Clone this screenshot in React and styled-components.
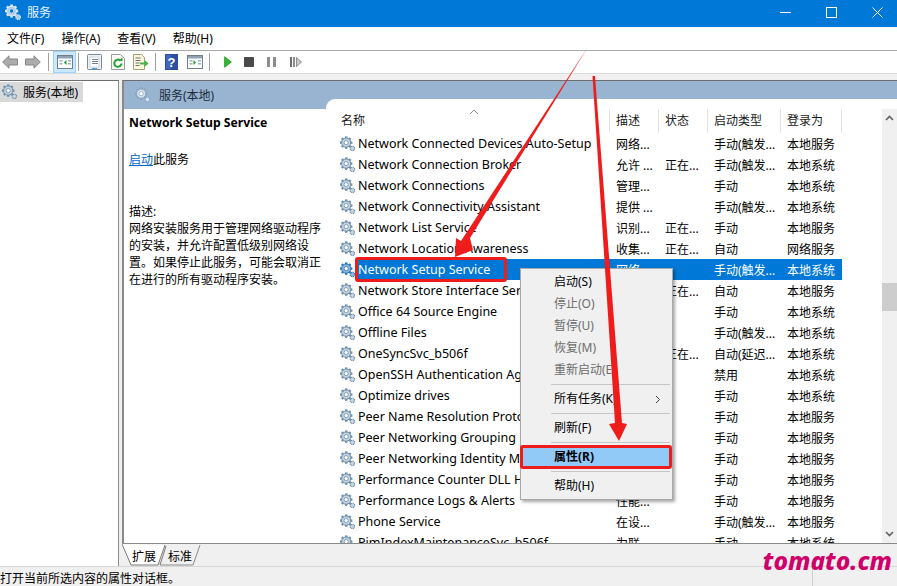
import React from "react";
import styled, { createGlobalStyle } from "styled-components";

const UI_FONT = `"Noto Sans", "Noto Sans CJK SC", sans-serif`;

const GlobalStyle = createGlobalStyle`
    html, body {
        margin: 0;
        padding: 0;
        background: #f0f0f0;
    }
    body {
        font-family: ${UI_FONT};
        font-size: 12px;
        color: #000;
    }
`;

const Page = styled.div`
    position: relative;
    width: 897px;
    height: 586px;
    overflow: hidden;
    display: flex;
    flex-direction: column;
    background: #f0f0f0;
`;

const TitleBar = styled.div`
    height: 27px;
    box-sizing: border-box;
    background: #0078d7;
    color: #fff;
    display: flex;
    align-items: center;
    padding: 0 0 3px 5px;
    flex: none;
`;

const TitleText = styled.span`
    font-size: 12px;
    color: #e8f2fb;
    flex: 1;
    margin-left: 5px;
`;

const WindowButton = styled.div`
    width: 46px;
    height: 24px;
    display: flex;
    align-items: center;
    justify-content: center;
    position: relative;
    left: 3px;
`;

const MenuBar = styled.div`
    height: 22px;
    background: #fff;
    border-bottom: 1px solid #a9a9a9;
    display: flex;
    align-items: center;
    padding: 1px 0 0 7px;
    gap: 17px;
    flex: none;
`;

const MenuLabel = styled.span`
    font-size: 12px;
    line-height: 22px;
`;

const Toolbar = styled.div`
    height: 22px;
    background: #fff;
    border-bottom: 1px solid #dcdcdc;
    display: flex;
    align-items: center;
    flex: none;
`;

const ToolButton = styled.div`
    width: ${(p) => p.$w}px;
    height: 22px;
    display: flex;
    align-items: center;
    justify-content: center;
    box-sizing: border-box;
    background: ${(p) => (p.$active ? "#cce8ff" : "transparent")};
    border: ${(p) => (p.$active ? "1px solid #99d1ff" : "none")};
`;

const ToolDivider = styled.div`
    width: 1px;
    height: 18px;
    background: #a0a0a0;
    margin: 0 4px 0 ${(p) => p.$left}px;
`;

const Main = styled.div`
    flex: 1;
    min-height: 0;
    margin-top: 6px;
    display: flex;
    gap: 3px;
`;

const TreePane = styled.div`
    width: 119px;
    flex: none;
    background: #fff;
    border-top: 1px solid #6d6d6d;
    border-right: 1px solid #8a8a8a;
    padding-top: 1px;
    box-sizing: border-box;
`;

const TreeItem = styled.div`
    display: flex;
    align-items: center;
    gap: 5px;
    height: 20px;
    padding-left: 2px;
    background: #d9d9d9;
    font-size: 12px;
    width: 83px;
    box-sizing: border-box;
`;

const ContentColumn = styled.div`
    flex: 1;
    min-width: 0;
    display: flex;
    flex-direction: column;
`;

const ContentPane = styled.div`
    flex: 1;
    min-height: 0;
    display: flex;
    flex-direction: column;
    border-top: 1px solid #6d6d6d;
    border-left: 2px solid #8a8a8a;
    border-bottom: 1px solid #8a8a8a;
    background: #fff;
`;

const PaneHeader = styled.div`
    height: 28px;
    background: #99b4d1;
    display: flex;
    align-items: center;
    gap: 8px;
    padding-left: 11px;
    font-size: 12px;
    color: #1c2b3a;
    flex: none;
`;

const PaneBody = styled.div`
    flex: 1;
    min-height: 0;
    display: flex;
    margin-top: -10px;
`;

const Details = styled.div`
    width: 202px;
    flex: none;
    padding: 15px 0 0 5px;
    box-sizing: border-box;
    line-height: 17px;
    font-size: 12px;
`;

const DetailsTitle = styled.div`
    font-weight: 700;
    font-size: 12.2px;
    line-height: 18px;
    margin-bottom: 19px;
`;

const StartLine = styled.div`
    margin-bottom: 35px;
`;

const StartLink = styled.span`
    color: #0066cc;
    text-decoration: underline;
`;

const ListArea = styled.div`
    position: relative;
    flex: 1;
    min-width: 0;
    display: flex;
    overflow: hidden;
    padding-top: 10px;
    box-sizing: border-box;
    background: #fff;
    border-top-left-radius: 9px;
`;

const Grid = styled.div`
    flex: 1;
    min-width: 0;
    overflow: hidden;
    display: flex;
    flex-direction: column;
`;

const HeaderRow = styled.div`
    display: grid;
    grid-template-columns: 284px 49px 49px 73px 61px;
    height: 24px;
    flex: none;
`;

const HeaderCell = styled.div`
    position: relative;
    padding-left: ${(p) => p.$pad || 6}px;
    font-size: 12px;
    line-height: 24px;
    color: #1a1a1a;
    border-right: 1px solid #e3e3e3;
`;

const SortArrow = styled.svg`
    position: absolute;
    left: 143px;
    top: 0;
`;

const Rows = styled.div`
    flex: 1;
    min-height: 0;
    overflow: hidden;
`;

const Row = styled.div`
    display: flex;
    height: 21px;
    font-size: 12px;
`;

const RowIcon = styled.div`
    width: 30px;
    flex: none;
    display: flex;
    align-items: center;
    padding-left: 14px;
    box-sizing: border-box;
`;

const RowBody = styled.div`
    display: grid;
    grid-template-columns: 254px 49px 49px 73px 61px;
    width: 486px;
    align-items: center;
    background: ${(p) => (p.$selected ? "#0078d7" : "transparent")};
    color: ${(p) => (p.$selected ? "#fff" : "#000")};
`;

const NameCell = styled.div`
    padding-left: 2px;
    white-space: nowrap;
    overflow: hidden;
    font-size: 12.5px;
`;

const Cell = styled.div`
    padding-left: 6px;
    white-space: nowrap;
    overflow: hidden;
`;

const ScrollBar = styled.div`
    width: 15px;
    flex: none;
    background: #f0f0f0;
    display: flex;
    flex-direction: column;
    justify-content: space-between;
    align-items: center;
    position: relative;
`;

const ScrollThumb = styled.div`
    position: absolute;
    left: 0;
    top: 174px;
    width: 15px;
    height: 28px;
    background: #cdcdcd;
`;

const ScrollArrow = styled.svg`
    margin: 6px 0;
`;

const TabStrip = styled.div`
    height: 22px;
    display: flex;
    flex: none;
`;

const TabShape = styled.svg`
    display: block;
    flex: none;
`;

const StatusBar = styled.div`
    height: 19px;
    border-top: 1px solid #d7d7d7;
    font-size: 12px;
    line-height: 23px;
    flex: none;
    display: grid;
    grid-template-columns: 813px 1fr;
    overflow: hidden;
`;

const StatusCell = styled.div`
    border-right: ${(p) => (p.$divider ? "1px solid #d0d0d0" : "none")};
`;

const ContextMenu = styled.div`
    position: absolute;
    left: 520px;
    top: 268px;
    width: 153px;
    height: 232px;
    box-sizing: border-box;
    background: #f0f0f0;
    border: 1px solid #a8a8a8;
    box-shadow: 2px 2px 3px rgba(0, 0, 0, 0.35);
    padding-top: 2px;
    font-size: 12px;
`;

const MenuItem = styled.div`
    height: 22px;
    line-height: 22px;
    position: relative;
    white-space: nowrap;
    overflow: hidden;
    color: ${(p) => (p.$disabled ? "#6d6d6d" : "#000")};
    background: ${(p) => (p.$active ? "#91c9f7" : "transparent")};
    font-weight: ${(p) => (p.$active ? 700 : 400)};
    margin: ${(p) => (p.$active ? "0 2px" : "0")};
    padding-left: ${(p) => (p.$active ? "31px" : "33px")};
`;

const Caret = styled.svg`
    position: absolute;
    right: 11px;
    top: 7px;
`;

const MenuSeparator = styled.div`
    height: 1px;
    margin: 3px 2px 3px 30px;
    background: #c6c6c6;
`;

const Highlight = styled.div`
    position: absolute;
    left: ${(p) => p.$x}px;
    top: ${(p) => p.$y}px;
    width: ${(p) => p.$w}px;
    height: ${(p) => p.$h}px;
    box-sizing: border-box;
    border: 3px solid #ef1c1c;
    border-radius: 3px;
`;

const ArrowLayer = styled.svg`
    position: absolute;
    left: 0;
    top: 0;
    pointer-events: none;
`;

const Watermark = styled.div`
    position: absolute;
    right: 5px;
    top: 544px;
    font-family: "Noto Sans", sans-serif;
    font-weight: 800;
    font-style: italic;
    font-size: 24.5px;
    line-height: 34px;
    color: #d0006a;
`;

const GEAR_TEETH = [0, 45, 90, 135, 180, 225, 270, 315];

const GEAR_COLORS = {
    normal: ["#6f8faa", "#c3d4e2", "#fff"],
    faded: ["#8aa4bd", "#d8e4ee", "#fff"],
    title: ["#dce9f5", "#a9cbea", "#0078d7"],
    selected: ["#2f76b8", "#8db6dc", "#fff"],
};

function Gear({ size = 16, tone = "normal" }) {
    const [dark, light, core] = GEAR_COLORS[tone];
    return (
        <svg width={size} height={size} viewBox="0 0 16 16">
            {GEAR_TEETH.map((a) => (
                <rect
                    key={a}
                    x="5"
                    y="0.4"
                    width="2.4"
                    height="3"
                    fill={dark}
                    transform={`rotate(${a} 6.2 6.6)`}
                />
            ))}
            <circle cx="6.2" cy="6.6" r="4.6" fill={light} stroke={dark} strokeWidth="1" />
            <circle cx="6.2" cy="6.6" r="2.1" fill={core} stroke={dark} strokeWidth="0.8" />
            <circle cx="12.4" cy="12.4" r="2.2" fill={light} stroke={dark} strokeWidth="1.2" strokeDasharray="1 .6" />
        </svg>
    );
}

function BackArrow({ flip }) {
    return (
        <svg width="16" height="14" viewBox="0 0 16 14" style={flip ? { transform: "scaleX(-1)" } : undefined}>
            <path d="M.7 7 7 .8V4h8.500v6H7v3.200z" fill="#ababab" stroke="#858585" />
        </svg>
    );
}

function PanelIcon({ arrow }) {
    return (
        <svg width="16" height="14" viewBox="0 0 16 14">
            <rect x="0.5" y="0.5" width="15" height="13" fill="#fff" stroke="#6d7f8c" />
            <rect x="1" y="1" width="14" height="2.5" fill="#8fa3b3" />
            <rect x="2.5" y="5" width="3" height="1.5" fill="#9fb2c2" />
            <rect x="2.5" y="8" width="3" height="1.5" fill="#9fb2c2" />
            <rect x="11" y="5" width="3" height="1.5" fill="#9fb2c2" />
            <rect x="11" y="8" width="3" height="1.5" fill="#9fb2c2" />
            <path d={arrow === "left" ? "M9.5 5v5L6.8 7.5z" : "M6.5 5v5l2.7-2.5z"} fill="#2ea043" />
        </svg>
    );
}

function ListIcon() {
    return (
        <svg width="15" height="16" viewBox="0 0 15 16">
            <rect x="0.5" y="0.5" width="14" height="15" rx="1" fill="#eef2f5" stroke="#7c8a96" />
            <rect x="3" y="3" width="9" height="10" fill="#fff" stroke="#b4bec6" strokeWidth="0.6" />
            <path d="M5 5.500h6M5 7.500h6M5 9.500h6" stroke="#76838e" />
            <rect x="5" y="14" width="5" height="1.500" fill="#3f9be0" />
        </svg>
    );
}

function RefreshIcon() {
    return (
        <svg width="14" height="16" viewBox="0 0 14 16">
            <path d="M.5.5h9l4 4v11H.5z" fill="#fbfbf3" stroke="#9c9c9c" />
            <path d="M10.500 9.500a3.600 3.600 0 1 1-1.200-3" fill="none" stroke="#25a13a" strokeWidth="2" />
            <path d="M7.500 7h4V3.500z" fill="#25a13a" />
        </svg>
    );
}

function ExportIcon() {
    return (
        <svg width="16" height="16" viewBox="0 0 16 16">
            <path d="M.5.5h8l3 3v12h-11z" fill="#fdf8dc" stroke="#a5a182" />
            <path d="M2.500 4h5M2.500 6.500h5M2.500 9h4M2.500 11.500h4" stroke="#6f6f6f" />
            <path d="M7 8.500h4.500V6l4 3.500-4 3.500v-2.500H7z" fill="#49b34a" />
        </svg>
    );
}

function HelpIcon() {
    return (
        <svg width="13" height="16" viewBox="0 0 13 16">
            <rect width="13" height="16" fill="#2d4e9e" />
            <rect x="1" y="1" width="5" height="14" fill="#3f67bd" />
            <text x="6.500" y="13" textAnchor="middle" fontSize="13" fontWeight="700" fontFamily="Liberation Sans" fill="#fff">?</text>
        </svg>
    );
}

function PlayIcon() {
    return (
        <svg width="8" height="12" viewBox="0 0 8 12">
            <path d="M.7.8v10.400L7.300 6z" fill="#3cb33c" stroke="#2f9e2f" />
        </svg>
    );
}

function StopIcon() {
    return (
        <svg width="10" height="10" viewBox="0 0 10 10">
            <rect width="10" height="10" rx="1" fill="#4a4a4a" />
        </svg>
    );
}

function PauseIcon() {
    return (
        <svg width="9" height="10" viewBox="0 0 9 10">
            <rect width="3" height="10" fill="#8c8c8c" />
            <rect x="6" width="3" height="10" fill="#8c8c8c" />
        </svg>
    );
}

function ResumeIcon() {
    return (
        <svg width="12" height="10" viewBox="0 0 12 10">
            <rect width="2" height="10" fill="#6c6c6c" />
            <rect x="3" width="2" height="10" fill="#8c8c8c" />
            <path d="M6.500.5v9l5-4.500z" fill="#c9c9c9" stroke="#8c8c8c" />
        </svg>
    );
}

const MENUS = ["文件(F)", "操作(A)", "查看(V)", "帮助(H)"];

const SERVICES = [
    ["Network Connected Devices Auto-Setup", "网络...", "", "手动(触发...", "本地服务"],
    ["Network Connection Broker", "允许 ...", "正在...", "手动(触发...", "本地系统"],
    ["Network Connections", "管理...", "", "手动", "本地系统"],
    ["Network Connectivity Assistant", "提供 ...", "", "手动(触发...", "本地系统"],
    ["Network List Service", "识别...", "正在...", "手动", "本地服务"],
    ["Network Location Awareness", "收集...", "正在...", "自动", "网络服务"],
    ["Network Setup Service", "网络...", "", "手动(触发...", "本地系统"],
    ["Network Store Interface Service", "此服...", "正在...", "自动", "本地服务"],
    ["Office 64 Source Engine", "保存...", "", "手动", "本地系统"],
    ["Offline Files", "脱机...", "", "手动(触发...", "本地系统"],
    ["OneSyncSvc_b506f", "此服...", "正在...", "自动(延迟...", "本地系统"],
    ["OpenSSH Authentication Agent", "", "", "禁用", "本地系统"],
    ["Optimize drives", "", "", "手动", "本地系统"],
    ["Peer Name Resolution Protocol", "", "", "手动", "本地服务"],
    ["Peer Networking Grouping", "", "", "手动", "本地服务"],
    ["Peer Networking Identity Manager", "", "", "手动", "本地服务"],
    ["Performance Counter DLL Host", "", "", "手动", "本地服务"],
    ["Performance Logs & Alerts", "性能...", "", "手动", "本地服务"],
    ["Phone Service", "在设...", "", "手动(触发...", "本地服务"],
    ["PimIndexMaintenanceSvc_b506f", "为联...", "", "手动", "本地系统"],
];

const SELECTED = "Network Setup Service";

function App() {
    return (
        <Page>
            <GlobalStyle />
            <TitleBar>
                <Gear size={17} tone="title" />
                <TitleText>服务</TitleText>
                <WindowButton>
                    <svg width="11" height="11" viewBox="0 0 11 11">
                        <path d="M0 5.500h11" stroke="#fff" />
                    </svg>
                </WindowButton>
                <WindowButton>
                    <svg width="11" height="11" viewBox="0 0 11 11">
                        <rect x="0.500" y="0.500" width="10" height="10" fill="none" stroke="#fff" />
                    </svg>
                </WindowButton>
                <WindowButton>
                    <svg width="11" height="11" viewBox="0 0 11 11">
                        <path d="M.5.5l10 10M10.500.5l-10 10" stroke="#fff" />
                    </svg>
                </WindowButton>
            </TitleBar>
            <MenuBar>
                {MENUS.map((m) => (
                    <MenuLabel key={m}>{m}</MenuLabel>
                ))}
            </MenuBar>
            <Toolbar>
                <ToolButton $w={20}><BackArrow /></ToolButton>
                <ToolButton $w={26}><BackArrow flip /></ToolButton>
                <ToolDivider $left={2} />
                <ToolButton $w={23} $active><PanelIcon arrow="left" /></ToolButton>
                <ToolDivider $left={2} />
                <ToolButton $w={23}><ListIcon /></ToolButton>
                <ToolButton $w={24}><RefreshIcon /></ToolButton>
                <ToolButton $w={22}><ExportIcon /></ToolButton>
                <ToolDivider $left={3} />
                <ToolButton $w={23}><HelpIcon /></ToolButton>
                <ToolButton $w={24}><PanelIcon arrow="right" /></ToolButton>
                <ToolDivider $left={2} />
                <ToolButton $w={27}><PlayIcon /></ToolButton>
                <ToolButton $w={16}><StopIcon /></ToolButton>
                <ToolButton $w={29}><PauseIcon /></ToolButton>
                <ToolButton $w={20}><ResumeIcon /></ToolButton>
            </Toolbar>
            <Main>
                <TreePane>
                    <TreeItem>
                        <Gear />
                        服务(本地)
                    </TreeItem>
                </TreePane>
                <ContentColumn>
                    <ContentPane>
                        <PaneHeader>
                            <Gear tone="faded" />
                            服务(本地)
                        </PaneHeader>
                        <PaneBody>
                            <Details>
                                <DetailsTitle>Network Setup Service</DetailsTitle>
                                <StartLine>
                                    <StartLink>启动</StartLink>此服务
                                </StartLine>
                                <div>描述:</div>
                                <div>
                                    网络安装服务用于管理网络驱动程序的安装，并允许配置低级别网络设置。如果停止此服务，可能会取消正在进行的所有驱动程序安装。
                                </div>
                            </Details>
                            <ListArea>
                                <Grid>
                                    <HeaderRow>
                                        <HeaderCell $pad={15}>
                                            名称
                                            <SortArrow width="10" height="6" viewBox="0 0 10 6">
                                                <path d="M1 5l4-4 4 4" fill="none" stroke="#8c8c8c" />
                                            </SortArrow>
                                        </HeaderCell>
                                        <HeaderCell>描述</HeaderCell>
                                        <HeaderCell>状态</HeaderCell>
                                        <HeaderCell>启动类型</HeaderCell>
                                        <HeaderCell>登录为</HeaderCell>
                                    </HeaderRow>
                                    <Rows>
                                        {SERVICES.map(([name, desc, state, start, logon]) => {
                                            const selected = name === SELECTED;
                                            return (
                                                <Row key={name}>
                                                    <RowIcon>
                                                        <Gear tone={selected ? "selected" : "normal"} />
                                                    </RowIcon>
                                                    <RowBody $selected={selected}>
                                                        <NameCell>{name}</NameCell>
                                                        <Cell>{desc}</Cell>
                                                        <Cell>{state}</Cell>
                                                        <Cell>{start}</Cell>
                                                        <Cell>{logon}</Cell>
                                                    </RowBody>
                                                </Row>
                                            );
                                        })}
                                    </Rows>
                                </Grid>
                                <ScrollBar>
                                    <ScrollArrow width="9" height="6" viewBox="0 0 9 6">
                                        <path d="M1 5l3.500-3.500L8 5" fill="none" stroke="#606060" strokeWidth="1.600" />
                                    </ScrollArrow>
                                    <ScrollThumb />
                                    <ScrollArrow width="9" height="6" viewBox="0 0 9 6">
                                        <path d="M1 1l3.500 3.500L8 1" fill="none" stroke="#606060" strokeWidth="1.600" />
                                    </ScrollArrow>
                                </ScrollBar>
                            </ListArea>
                        </PaneBody>
                    </ContentPane>
                    <TabStrip>
                        <TabShape width="130" height="22" viewBox="0 0 130 22">
                            <path d="M0 0l9 21h27l7-20" fill="#fff" stroke="#7a7a7a" />
                            <path d="M38 21h33l7-20" fill="none" stroke="#8a8a8a" />
                            <path d="M38 21l6-19" fill="none" stroke="#7a7a7a" />
                            <text x="10" y="16.500" fontSize="12" fontFamily="Noto Sans CJK SC">扩展</text>
                            <text x="46" y="16.500" fontSize="12" fontFamily="Noto Sans CJK SC">标准</text>
                        </TabShape>
                    </TabStrip>
                </ContentColumn>
            </Main>
            <StatusBar>
                <StatusCell $divider>打开当前所选内容的属性对话框。</StatusCell>
                <StatusCell />
            </StatusBar>

            <ContextMenu>
                <MenuItem>启动(S)</MenuItem>
                <MenuItem $disabled>停止(O)</MenuItem>
                <MenuItem $disabled>暂停(U)</MenuItem>
                <MenuItem $disabled>恢复(M)</MenuItem>
                <MenuItem $disabled>重新启动(E)</MenuItem>
                <MenuSeparator />
                <MenuItem>
                    所有任务(K)
                    <Caret width="6" height="9" viewBox="0 0 6 9">
                        <path d="M1 1l3.500 3.500L1 8" fill="none" stroke="#404040" />
                    </Caret>
                </MenuItem>
                <MenuSeparator />
                <MenuItem>刷新(F)</MenuItem>
                <MenuSeparator />
                <MenuItem $active>属性(R)</MenuItem>
                <MenuSeparator />
                <MenuItem>帮助(H)</MenuItem>
            </ContextMenu>

            <Highlight $x={355} $y={257} $w={152} $h={25} />
            <Highlight $x={520} $y={445} $w={152} $h={24} />

            <ArrowLayer width="897" height="586" viewBox="0 0 897 586">
                <path
                    d="M588 47 470 238 473 250 455 257 456 238 461 241z"
                    fill="#ef1c1c"
                />
                <path
                    d="M592.500 76 595 76 622 423 627 424 619 441 609 424 615 423z"
                    fill="#ef1c1c"
                />
            </ArrowLayer>

            <Watermark>tomato.cm</Watermark>
        </Page>
    );
}

export default App;
